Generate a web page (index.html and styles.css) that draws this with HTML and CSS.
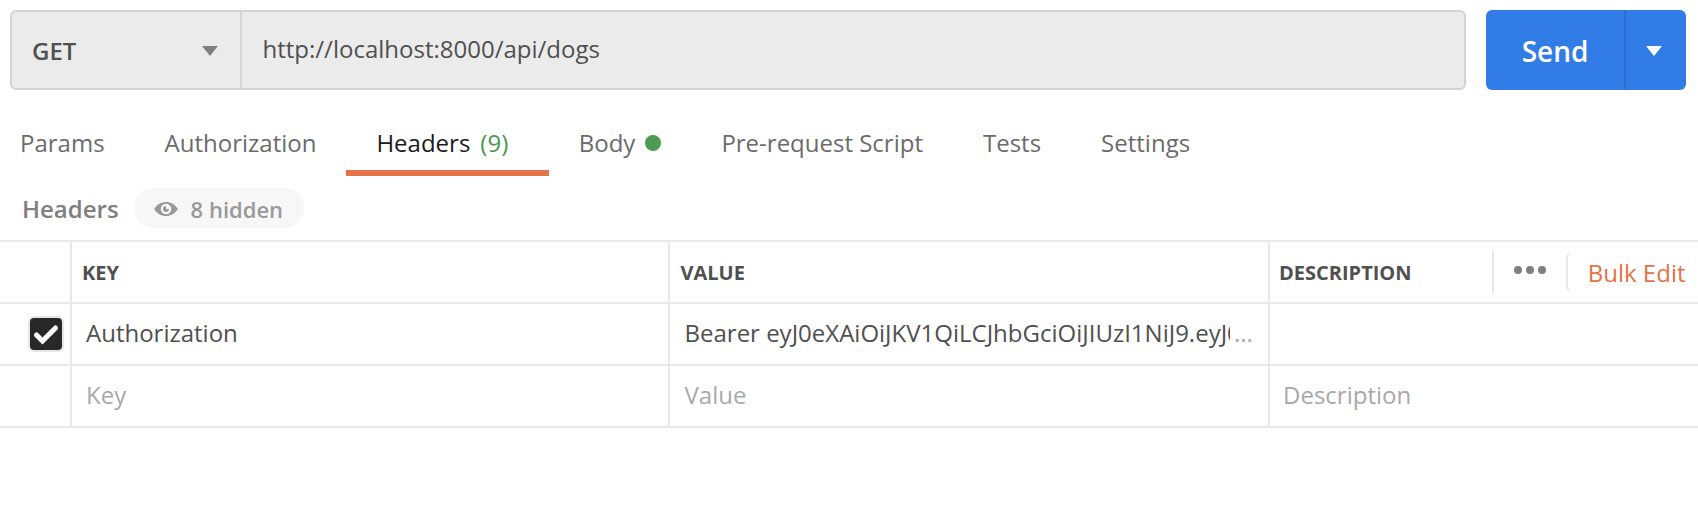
FILE: index.html
```html
<!DOCTYPE html>
<html lang="en">
<head>
<meta charset="utf-8">
<title>Request</title>
<link rel="stylesheet" href="styles.css">
</head>
<body>
<div class="request">
  <div class="address">
    <div class="method"><span class="method-name">GET</span>
      <svg class="caret" width="16" height="10" viewBox="0 0 16 10"><path d="M0 0H16L8 10Z" fill="#808080"/></svg>
    </div>
    <div class="url">http://localhost:8000/api/dogs</div>
  </div>
  <div class="send">
    <div class="send-label">Send</div>
    <div class="send-menu"><svg class="caret" width="16" height="10" viewBox="0 0 16 10"><path d="M0 0H16L8 10Z" fill="#fff"/></svg></div>
  </div>
</div>
<nav class="tabs">
  <div class="tab">Params</div>
  <div class="tab">Authorization</div>
  <div class="tab active">Headers <span class="count">(9)</span></div>
  <div class="tab">Body <span class="dot"></span></div>
  <div class="tab">Pre-request Script</div>
  <div class="tab">Tests</div>
  <div class="tab">Settings</div>
</nav>
<div class="subhead">
  <span class="subtitle">Headers</span>
  <div class="pill">
    <svg class="eye" width="24" height="14" viewBox="0 0 24 14"><path fill-rule="evenodd" fill="#999" d="M0 7C3 2.4 7.2 0 12 0S21 2.4 24 7C21 11.6 16.800 14 12 14S3 11.600 0 7ZM12 1.700A5.300 5.300 0 1 0 12 12.300A5.300 5.300 0 1 0 12 1.700Z"/><path fill="#999" d="M12 4A3 3 0 1 0 15 7H12Z"/></svg>
    <span class="hidden-count">8 hidden</span>
  </div>
</div>
<div class="table">
  <div class="row head">
    <div class="cell"></div>
    <div class="cell">KEY</div>
    <div class="cell value">VALUE</div>
    <div class="cell last">
      <span>DESCRIPTION</span>
      <div class="actions">
        <div class="more"><i></i><i></i><i></i></div>
        <div class="bulk">Bulk Edit</div>
      </div>
    </div>
  </div>
  <div class="row">
    <div class="cell check"><div class="box"><svg width="32" height="32" viewBox="0 0 32 32"><path d="M6.500 17L12.500 23L25.500 10" fill="none" stroke="#fff" stroke-width="5" stroke-linecap="round"/></svg></div></div>
    <div class="cell">Authorization</div>
    <div class="cell token"><span class="token-text">Bearer eyJ0eXAiOiJKV1QiLCJhbGciOiJIUzI1NiJ9.eyJ0</span><span class="more-text">...</span></div>
    <div class="cell last"></div>
  </div>
  <div class="row empty">
    <div class="cell"></div>
    <div class="cell">Key</div>
    <div class="cell value">Value</div>
    <div class="cell last">Description</div>
  </div>
</div>
</body>
</html>
```
FILE: styles.css
```css
* { box-sizing: border-box; }
body {
  margin: 0;
  background: #fff;
  color: #505050;
  font: 24px/32px "Open Sans", "Noto Sans", sans-serif;
  white-space: nowrap;
}
svg { display: block; flex: none; }
.request { display: flex; gap: 20px; padding: 10px 12px 0 10px; }
.address {
  display: flex;
  flex: 1;
  height: 80px;
  background: #ebebeb;
  border: 2px solid #d3d3d3;
  border-radius: 6px;
}
.method {
  display: flex;
  align-items: center;
  justify-content: space-between;
  width: 230px;
  padding: 2px 22px 0 20px;
  border-right: 2px solid #d3d3d3;
  font-weight: 600;
}
.url { padding: 21px 20px 0 20.5px; }
.send {
  display: flex;
  width: 200px;
  height: 80px;
  background: #317ce6;
  border-radius: 6px;
  color: #fff;
}
.send-label {
  width: 140px;
  padding: 25px 0 0;
  border-right: 2px solid #2c70cf;
  text-align: center;
  font-size: 28px;
  font-weight: 600;
}
.send-menu { display: flex; align-items: center; padding: 2px 0 0 20px; }
.tabs { display: flex; padding-top: 26px; margin-left: -10px; color: #6b6b6b; }
.tab {
  display: flex;
  align-items: center;
  gap: 10px;
  height: 60px;
  padding: 0 30px;
  border-bottom: 6px solid transparent;
}
.tab.active { padding-right: 40.5px; color: #1b1b1b; border-color: #e27447; }
.count { color: #4b9850; }
.dot { width: 16px; height: 16px; border-radius: 50%; background: #4d9b52; }
.subhead {
  display: flex;
  align-items: center;
  gap: 15px;
  padding: 12px 22px;
  color: #808080;
  font-weight: 600;
}
.subtitle { padding-top: 2px; }
.pill {
  display: flex;
  align-items: center;
  gap: 13px;
  width: 170px;
  height: 40px;
  padding: 0 20px;
  border-radius: 20px;
  background: #f7f7f7;
  color: #999;
  font-size: 22px;
}
.eye { margin-top: 2px; }
.hidden-count { padding-top: 2px; }
.table { border-top: 2px solid #e9e9e9; }
.row {
  display: grid;
  grid-template-columns: 72px 598px 600px 1fr;
  height: 62px;
  border-bottom: 2px solid #e9e9e9;
}
.cell {
  display: flex;
  align-items: center;
  min-width: 0;
  padding: 0 14px 2px;
  border-right: 2px solid #e9e9e9;
}
.cell.value, .cell.token { padding-left: 14.5px; }
.cell.last { border-right: 0; padding-left: 13px; }
.head .cell { padding: 1px 10px 0; font-size: 20px; font-weight: 700; }
.head .value { padding-left: 10.5px; }
.head .last { justify-content: space-between; padding: 1px 12.5px 0 9px; }
.actions { display: flex; align-items: center; margin-top: -1px; }
.more {
  display: flex;
  gap: 4px;
  width: 74px;
  height: 44px;
  padding: 16px 0 0 20px;
  border-left: 2px solid #e9e9e9;
}
.more i { width: 8px; height: 8px; border-radius: 50%; background: #808080; }
.bulk {
  height: 40px;
  padding: 5px 0 0 20px;
  border-left: 2px solid #e9e9e9;
  border-radius: 6px;
  color: #e27447;
  font-size: 24px;
  font-weight: 400;
}
.cell.check { justify-content: flex-end; padding: 0 6px 0 0; }
.box { border: 2px solid #e6e6e6; border-radius: 6px; }
.box svg { background: #282828; border-radius: 4px; }
.token { gap: 4px; }
.token-text { width: 545.5px; overflow: hidden; }
.more-text { color: #a9a9a9; }
.empty { color: #a9a9a9; }
```
